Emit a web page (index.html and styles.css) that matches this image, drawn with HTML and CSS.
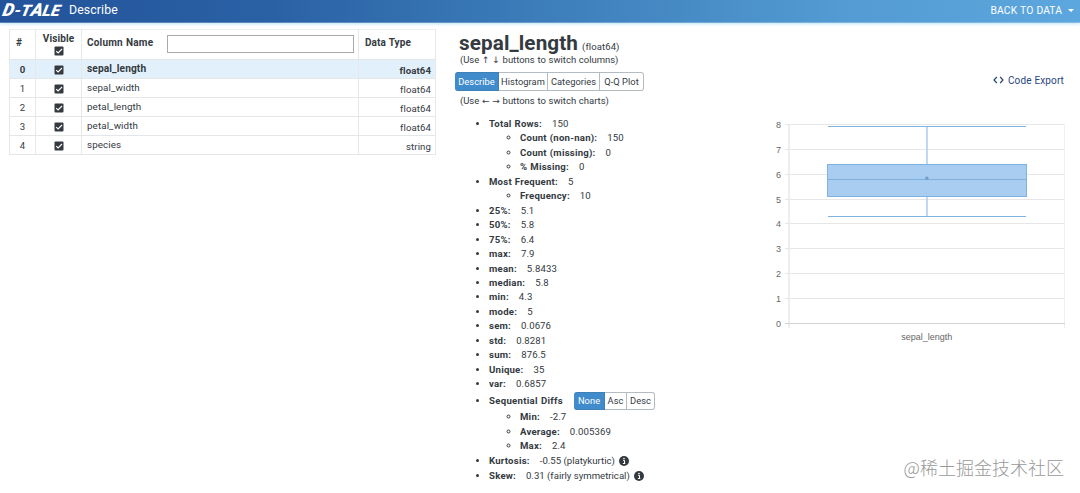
FILE: index.html
```html
<!DOCTYPE html>
<html lang="en">
<head>
  <meta charset="UTF-8">
  <title>D-Tale Describe</title>
  <link rel="stylesheet" href="styles.css">
</head>
<body>

<svg class="defs" width="0" height="0">
  <symbol id="check" viewBox="0 0 10 10">
    <rect x="0.5" y="0.5" width="9" height="9" rx="1" fill="#343a3f"/>
    <path d="M2.2 5.1 L4.1 7 L8 3" fill="none" stroke="#fff" stroke-width="1.1"/>
  </symbol>
  <symbol id="info" viewBox="0 0 10 10">
    <circle cx="5" cy="5" r="5" fill="#343a3f"/>
    <path d="M4 4.3 H5.5 V7.4 M3.9 7.5 H6.3" fill="none" stroke="#fff" stroke-width="1"/>
    <circle cx="5" cy="2.5" r="0.8" fill="#fff"/>
  </symbol>
</svg>

<header class="topbar">
  <span class="logo"><span class="tall">D</span>-T<span class="tall">A</span>LE</span>
  <span class="page">Describe</span>
  <span class="back">BACK TO DATA</span>
  <span class="caret"></span>
</header>

<main class="content">
  <div class="grid">
    <div class="row head">
      <div class="cell num">#</div>
      <div class="cell vis"><span>Visible</span><svg class="check"><use href="#check"/></svg></div>
      <div class="cell name"><span>Column Name</span><input type="text" class="filter"></div>
      <div class="cell type">Data Type</div>
    </div>
    <div class="row selected">
      <div class="cell num">0</div>
      <div class="cell vis"><svg class="check"><use href="#check"/></svg></div>
      <div class="cell name">sepal_length</div>
      <div class="cell type">float64</div>
    </div>
    <div class="row">
      <div class="cell num">1</div>
      <div class="cell vis"><svg class="check"><use href="#check"/></svg></div>
      <div class="cell name">sepal_width</div>
      <div class="cell type">float64</div>
    </div>
    <div class="row">
      <div class="cell num">2</div>
      <div class="cell vis"><svg class="check"><use href="#check"/></svg></div>
      <div class="cell name">petal_length</div>
      <div class="cell type">float64</div>
    </div>
    <div class="row">
      <div class="cell num">3</div>
      <div class="cell vis"><svg class="check"><use href="#check"/></svg></div>
      <div class="cell name">petal_width</div>
      <div class="cell type">float64</div>
    </div>
    <div class="row">
      <div class="cell num">4</div>
      <div class="cell vis"><svg class="check"><use href="#check"/></svg></div>
      <div class="cell name">species</div>
      <div class="cell type">string</div>
    </div>
  </div>

  <section class="details">
    <h1><span class="title">sepal_length</span> <small>(float64)</small></h1>
    <div class="hint">(Use <i class="arrow">↑</i> <i class="arrow">↓</i> buttons to switch columns)</div>
    <div class="tabs">
      <button class="active tab-describe">Describe</button>
      <button class="tab-histogram">Histogram</button>
      <button class="tab-categories">Categories</button>
      <button class="tab-qq">Q-Q Plot</button>
    </div>
    <div class="hint charts">(Use <i class="arrow">←</i> <i class="arrow">→</i> buttons to switch charts)</div>

    <ul class="stats">
      <li><b>Total Rows:</b>150
        <ul>
          <li><b>Count (non-nan):</b>150</li>
          <li><b>Count (missing):</b>0</li>
          <li><b>% Missing:</b>0</li>
        </ul>
      </li>
      <li><b>Most Frequent:</b>5
        <ul>
          <li><b>Frequency:</b>10</li>
        </ul>
      </li>
      <li><b>25%:</b>5.1</li>
      <li><b>50%:</b>5.8</li>
      <li><b>75%:</b>6.4</li>
      <li><b>max:</b>7.9</li>
      <li><b>mean:</b>5.8433</li>
      <li><b>median:</b>5.8</li>
      <li><b>min:</b>4.3</li>
      <li><b>mode:</b>5</li>
      <li><b>sem:</b>0.0676</li>
      <li><b>std:</b>0.8281</li>
      <li><b>sum:</b>876.5</li>
      <li><b>Unique:</b>35</li>
      <li><b>var:</b>0.6857</li>
      <li>
        <div class="diffs">
          <b>Sequential Diffs</b>
          <div class="tabs">
            <button class="active sort-none">None</button>
            <button class="sort-asc">Asc</button>
            <button class="sort-desc">Desc</button>
          </div>
        </div>
        <ul>
          <li><b>Min:</b>-2.7</li>
          <li><b>Average:</b>0.005369</li>
          <li><b>Max:</b>2.4</li>
        </ul>
      </li>
      <li><b>Kurtosis:</b>-0.55 (platykurtic)<svg class="info"><use href="#info"/></svg></li>
      <li><b>Skew:</b>0.31 (fairly symmetrical)<svg class="info"><use href="#info"/></svg></li>
    </ul>
  </section>

  <section class="chart">
    <div class="export">
      <svg width="11" height="8" viewBox="0 0 11 8"><path d="M3.8 1 L1 4 L3.8 7 M7.2 1 L10 4 L7.2 7" fill="none" stroke="#28457f" stroke-width="1.2"/></svg>
      <span>Code Export</span>
    </div>
    <svg class="boxplot" width="310" height="235" viewBox="0 0 310 235">
      <g fill="none" stroke="#e6e6e6">
        <path d="M15 9.5H295M15 34.5H295M15 59.5H295M15 84.5H295M15 108.5H295M15 133.5H295M15 158.5H295M15 183.5H295"/>
        <path d="M294.5 9V213" stroke="#f0f0f0"/>
        <path d="M19 9V213" stroke="#e8e8e8" stroke-width="1.5"/>
        <path d="M15 208.5H295" stroke="#d2d2d2"/>
      </g>
      <g class="ticks">
        <text x="11" y="13">8</text>
        <text x="11" y="38">7</text>
        <text x="11" y="63">6</text>
        <text x="11" y="88">5</text>
        <text x="11" y="112">4</text>
        <text x="11" y="137">3</text>
        <text x="11" y="162">2</text>
        <text x="11" y="187">1</text>
        <text x="11" y="212">0</text>
        <text x="156.8" y="225" class="label">sepal_length</text>
      </g>
      <g stroke="#7eb2df" fill="none">
        <path d="M58 11.5H256M58 101.5H256"/>
        <path d="M157 12V49M157 82V101" stroke="#b5d6f2" stroke-width="1.8"/>
        <rect x="57.5" y="49.5" width="199" height="32" fill="#a9cdf1"/>
        <path d="M58 64.5H256"/>
        <circle cx="156.8" cy="63.2" r="1.5" fill="#709fc9" stroke="#709fc9" stroke-width="0.5"/>
      </g>
    </svg>
  </section>
</main>

<div class="watermark">@稀土掘金技术社区</div>

</body>
</html>
```
FILE: styles.css
```css
* { box-sizing: border-box; }
body {
  margin: 0;
  width: 1080px;
  height: 493px;
  overflow: hidden;
  background: #fff;
  color: #343a3f;
  font-family: Roboto, "Liberation Sans", sans-serif;
  font-size: 9.6px;
  letter-spacing: 0.1px;
  word-spacing: 0.4px;
}
.defs { display: block; }
.topbar {
  display: flex;
  align-items: center;
  height: 23px;
  padding-bottom: 2px;
  color: #fff;
  background: linear-gradient(to right, #23539a 0%, #2a61a5 25%, #3c7dba 50%, #539bd2 78%, #5ca7de 100%);
  border-bottom: 1px solid rgba(255, 255, 255, 0.25);
  box-shadow: 0 1px 3px #b9e5f5;
}
.logo {
  width: 66px;
  padding-left: 3px;
  font: italic 900 16px/18px Roboto, sans-serif;
  letter-spacing: 0;
  transform: skewX(-12deg);
}
.logo .tall { font-size: 18px; }
.page { font-size: 12.3px; padding-left: 3px; }
.back { margin-left: auto; font-size: 10.3px; }
.caret {
  margin: 0 6px 0 6px;
  border: 3px solid transparent;
  border-top-color: #fff;
  border-bottom: 0;
}
.content { display: flex; height: 470px; }
.grid {
  flex: none;
  width: 427px;
  margin: 6px 0 0 9px;
}
.row {
  display: grid;
  grid-template-columns: 27px 46px 277px 77px;
  height: 19px;
}
.cell {
  display: flex;
  align-items: center;
  border-right: 1px solid #e6e8ea;
  border-bottom: 1px solid #e4e7e9;
}
.cell:first-child { border-left: 1px solid #e6e8ea; }
.num { justify-content: center; }
.vis { justify-content: center; padding-top: 2px; }
.name { padding: 0 0 1px 5px; font-size: 9.8px; }
.type { justify-content: flex-end; padding: 2px 4px 0 0; }
.head { height: 31px; font-weight: 700; }
.head .cell { border-top: 1px solid #eceeef; font-size: 10px; }
.head .num { justify-content: flex-start; padding: 0 0 4px 6px; }
.head .vis { flex-direction: column; line-height: 13px; padding: 0 0 1px; }
.head .type { justify-content: flex-start; padding: 0 0 5px 6px; }
.head .name { padding-bottom: 5px; letter-spacing: 0.2px; }
.filter {
  width: 187px;
  height: 18px;
  margin: 4px 4px 0 auto;
  border: 1px solid #aaa;
  background: #fff;
}
.selected { background: #e2f0fb; font-weight: 700; }
.selected .name { font-size: 10.2px; }
.check { width: 10px; height: 10px; flex: none; }
.head .check { margin-top: 1px; }

.details { width: 310px; padding: 10px 0 0 19px; }
h1 {
  display: flex;
  align-items: baseline;
  gap: 4px;
  height: 20px;
  margin: 0 0 0 4px;
  font-size: 20.7px;
  line-height: 20px;
}
h1 small { font-size: 9.5px; font-weight: 400; }
.hint {
  margin-left: 5px;
  height: 13px;
  line-height: 13px;
  font-size: 9.5px;
  letter-spacing: -0.02px;
  white-space: nowrap;
}
.arrow { font: 9px/9px "DejaVu Sans", sans-serif; }
.tabs { display: flex; }
.details > .tabs { margin: 6px 0 0; }
.tabs button {
  height: 19px;
  padding: 0;
  border: 1px solid #b5bcc1;
  border-left-width: 0;
  background: #fff;
  color: #343a3f;
  font: 9.3px/16px Roboto, sans-serif;
  letter-spacing: 0.05px;
  white-space: nowrap;
}
.tabs button:first-child { border-radius: 3px 0 0 3px; }
.tabs button:last-child { border-radius: 0 3px 3px 0; }
.tabs .active { background: #3f8bcc; border-color: #3f80b7; color: #fff; }
.tab-describe { width: 44px; }
.tab-histogram { width: 49px; }
.tab-categories { width: 52px; }
.tab-qq { width: 44px; }
.charts { margin-top: 3px; }

.stats { margin: 10px 0 0; padding-left: 34px; line-height: 14.45px; }
.stats ul { padding-left: 31px; }
.stats b { margin-right: 10px; letter-spacing: 0.22px; }
.diffs { display: inline-flex; align-items: center; height: 18.8px; vertical-align: middle; }
.diffs .tabs button { height: 18px; }
.stats .diffs b { margin-right: 11px; letter-spacing: 0.3px; }
.sort-none { width: 31px; }
.sort-asc { width: 22px; }
.sort-desc { width: 28px; }
.info { width: 10px; height: 10px; margin-left: 4px; vertical-align: -2px; }
.stats > li:nth-last-child(-n+2) { letter-spacing: 0; word-spacing: 0; }
.stats > li:nth-last-child(2) { margin-top: 0.6px; }

.chart { width: 310px; padding-top: 49px; margin-left: 24px; }
.export {
  display: flex;
  align-items: center;
  justify-content: flex-end;
  gap: 4px;
  height: 16px;
  padding-right: 16px;
  color: #28457f;
  font-size: 10px;
}
.boxplot { display: block; margin-top: 27px; }
.ticks { font: 9px "Liberation Sans", sans-serif; letter-spacing: 0; fill: #666; text-anchor: end; }
.ticks .label { text-anchor: middle; }
.watermark {
  position: absolute;
  right: 16px;
  top: 454px;
  color: #999;
  font: 300 18px/26px "Noto Sans CJK SC", sans-serif;
  letter-spacing: 0;
  white-space: nowrap;
}
```
